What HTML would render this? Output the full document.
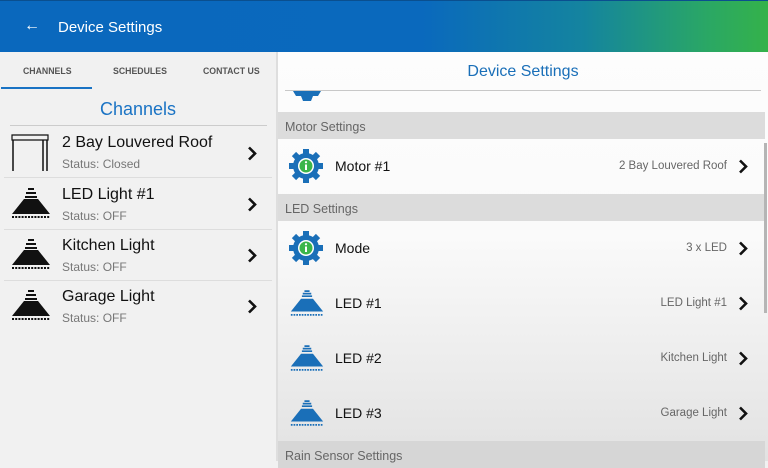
<!DOCTYPE html>
<html><head><style>
*{margin:0;padding:0;box-sizing:border-box}
body{width:768px;height:461px;overflow:hidden;font-family:"Liberation Sans",sans-serif;position:relative;background:#f1f1f1}
.hdr{position:absolute;left:0;top:0;width:768px;height:52px;background:linear-gradient(90deg,#0a68bd 0%,#0a69bd 55%,#14849f 76%,#2aa765 92%,#34b24a 100%);border-top:1px solid #0a4f8f}
.hdr .t{position:absolute;left:58px;top:18px;color:#fff;font-size:15px}
.hdr .a{position:absolute;left:24px;top:16px;color:#fff;font-size:16px;font-weight:bold}
.left{position:absolute;left:0;top:52px;width:276px;height:409px;background:#f1f1f1}
.tab{position:absolute;top:14px;font-size:9.5px;color:#555;font-weight:bold;transform:scaleX(.92);transform-origin:left}
.ul{position:absolute;left:1px;top:35px;width:91px;height:2px;background:#1a73c4}
.lt{position:absolute;left:0;width:276px;text-align:center;top:47px;font-size:18px;color:#1a73c4}
.hl{position:absolute;height:1px;background:#d4d4d4}
.row{position:absolute;left:0;width:276px;height:51px}
.row .n{position:absolute;left:62px;top:8px;font-size:16px;color:#111}
.row .s{position:absolute;left:62px;top:31px;font-size:12px;color:#777}
.chev{position:absolute}
.right{position:absolute;left:278px;top:52px;width:490px;height:409px;background:linear-gradient(#fdfdfd 0%,#fafafa 45%,#e2e2e2 100%)}
.rt{position:absolute;left:0;width:490px;text-align:center;top:11px;font-size:16px;color:#1a6fb8}
.bar{position:absolute;left:0;width:487px;height:27px;background:#dcdcdc;font-size:12.5px;color:#666;padding:8px 0 0 7px}
.ri{position:absolute;left:0;width:487px;height:55px}
.ri .n{position:absolute;left:57px;top:19px;font-size:14px;color:#111}
.ri .v{position:absolute;right:38px;top:21px;font-size:11.5px;color:#666}
.ri .c{position:absolute;right:17px;top:20px}
.ri svg.ic{position:absolute;left:11px;top:10px}
.sb{position:absolute;left:764px;top:143px;width:3px;height:170px;background:#b5b5b5}
</style></head><body>
<div class="hdr"><span class="a">&#8592;</span><span class="t">Device Settings</span></div>
<div class="left">
<span class="tab" style="left:23px">CHANNELS</span>
<span class="tab" style="left:113px">SCHEDULES</span>
<span class="tab" style="left:203px">CONTACT US</span>
<div class="ul"></div>
<div class="lt">Channels</div>
<div class="hl" style="left:10px;top:73px;width:257px;background:#ccc"></div>
<div class="row" style="top:74px">
<svg width="40" height="40" style="position:absolute;left:10px;top:5px" viewBox="0 0 40 40"><path d="M2 4h36v5H2z" fill="none" stroke="#111" stroke-width="1.2"/><path d="M3 9v31M37 9v31M33 9v31" stroke="#111" stroke-width="1.5"/></svg>
<span class="n">2 Bay Louvered Roof</span><span class="s">Status: Closed</span><svg class="chev" style="left:247px;top:20px" width="10" height="15" viewBox="0 0 10 15"><path d="M2 1.5l6 6-6 6" fill="none" stroke="#111" stroke-width="2.6"/></svg></div>
<div class="hl" style="left:4px;top:125px;width:268px;background:#ddd"></div>
<div class="row" style="top:126px"><svg width="42" height="40" style="position:absolute;left:10px;top:4px" viewBox="0 0 42 40"><path d="M18 7h6M16 11h10M15 15h12" stroke="#111" stroke-width="2"/><path d="M14 17h14l12 15H2z" fill="#111"/><path d="M2 35h38" stroke="#111" stroke-width="2" stroke-dasharray="2 1.2"/></svg><span class="n">LED Light #1</span><span class="s">Status: OFF</span><svg class="chev" style="left:247px;top:19px" width="10" height="15" viewBox="0 0 10 15"><path d="M2 1.5l6 6-6 6" fill="none" stroke="#111" stroke-width="2.6"/></svg></div>
<div class="hl" style="left:4px;top:177px;width:268px;background:#ddd"></div>
<div class="row" style="top:177px"><svg width="42" height="40" style="position:absolute;left:10px;top:4px" viewBox="0 0 42 40"><path d="M18 7h6M16 11h10M15 15h12" stroke="#111" stroke-width="2"/><path d="M14 17h14l12 15H2z" fill="#111"/><path d="M2 35h38" stroke="#111" stroke-width="2" stroke-dasharray="2 1.2"/></svg><span class="n">Kitchen Light</span><span class="s">Status: OFF</span><svg class="chev" style="left:247px;top:19px" width="10" height="15" viewBox="0 0 10 15"><path d="M2 1.5l6 6-6 6" fill="none" stroke="#111" stroke-width="2.6"/></svg></div>
<div class="hl" style="left:4px;top:228px;width:268px;background:#ddd"></div>
<div class="row" style="top:228px"><svg width="42" height="40" style="position:absolute;left:10px;top:4px" viewBox="0 0 42 40"><path d="M18 7h6M16 11h10M15 15h12" stroke="#111" stroke-width="2"/><path d="M14 17h14l12 15H2z" fill="#111"/><path d="M2 35h38" stroke="#111" stroke-width="2" stroke-dasharray="2 1.2"/></svg><span class="n">Garage Light</span><span class="s">Status: OFF</span><svg class="chev" style="left:247px;top:19px" width="10" height="15" viewBox="0 0 10 15"><path d="M2 1.5l6 6-6 6" fill="none" stroke="#111" stroke-width="2.6"/></svg></div>
</div>
<div style="position:absolute;left:276px;top:52px;width:2px;height:409px;background:#dedede"></div>
<div class="right">
<div class="rt">Device Settings</div>
<div class="hl" style="left:7px;top:38px;width:476px;background:#c8c8c8"></div>
<svg width="34" height="12" style="position:absolute;left:12px;top:39px" viewBox="0 0 34 12"><path d="M3 0h28l-3 5h-5l-2 5h-8l-2-5H6z" fill="#1a6fb8"/></svg>
<div class="bar" style="top:60px">Motor Settings</div>
<div class="ri" style="top:87px"><svg class="ic" width="34" height="34" viewBox="0 0 34 34"><g fill="#1a6fb8"><circle cx="17" cy="17" r="13"/><g id="t"><rect x="14" y="0" width="6" height="6"/><rect x="14" y="28" width="6" height="6"/><rect x="0" y="14" width="6" height="6"/><rect x="28" y="14" width="6" height="6"/></g><use href="#t" transform="rotate(45 17 17)"/></g><circle cx="17" cy="17" r="8" fill="#fff"/><circle cx="17" cy="17" r="6.5" fill="#3bb54a"/><rect x="16" y="15.5" width="2" height="5.5" fill="#fff"/><circle cx="17" cy="13.2" r="1.1" fill="#fff"/></svg><span class="n">Motor #1</span><span class="v">2 Bay Louvered Roof</span><svg class="c" width="10" height="15" viewBox="0 0 10 15"><path d="M2 1.5l6 6-6 6" fill="none" stroke="#111" stroke-width="2.6"/></svg></div>
<div class="bar" style="top:142px">LED Settings</div>
<div class="ri" style="top:169px"><svg class="ic" width="34" height="34" viewBox="0 0 34 34"><g fill="#1a6fb8"><circle cx="17" cy="17" r="13"/><g id="t2"><rect x="14" y="0" width="6" height="6"/><rect x="14" y="28" width="6" height="6"/><rect x="0" y="14" width="6" height="6"/><rect x="28" y="14" width="6" height="6"/></g><use href="#t2" transform="rotate(45 17 17)"/></g><circle cx="17" cy="17" r="8" fill="#fff"/><circle cx="17" cy="17" r="6.5" fill="#3bb54a"/><rect x="16" y="15.5" width="2" height="5.5" fill="#fff"/><circle cx="17" cy="13.2" r="1.1" fill="#fff"/></svg><span class="n">Mode</span><span class="v">3 x LED</span><svg class="c" width="10" height="15" viewBox="0 0 10 15"><path d="M2 1.5l6 6-6 6" fill="none" stroke="#111" stroke-width="2.6"/></svg></div>
<div class="ri" style="top:224px"><svg class="ic" width="36" height="34" viewBox="0 0 42 40"><path d="M18 6h6M16 9h10M15 12h12" stroke="#1a6fb8" stroke-width="2"/><path d="M14 15h14l12 15H2z" fill="#1a6fb8"/><path d="M2 34h38" stroke="#1a6fb8" stroke-width="2" stroke-dasharray="2 1.2"/></svg><span class="n">LED #1</span><span class="v">LED Light #1</span><svg class="c" width="10" height="15" viewBox="0 0 10 15"><path d="M2 1.5l6 6-6 6" fill="none" stroke="#111" stroke-width="2.6"/></svg></div>
<div class="ri" style="top:279px"><svg class="ic" width="36" height="34" viewBox="0 0 42 40"><path d="M18 6h6M16 9h10M15 12h12" stroke="#1a6fb8" stroke-width="2"/><path d="M14 15h14l12 15H2z" fill="#1a6fb8"/><path d="M2 34h38" stroke="#1a6fb8" stroke-width="2" stroke-dasharray="2 1.2"/></svg><span class="n">LED #2</span><span class="v">Kitchen Light</span><svg class="c" width="10" height="15" viewBox="0 0 10 15"><path d="M2 1.5l6 6-6 6" fill="none" stroke="#111" stroke-width="2.6"/></svg></div>
<div class="ri" style="top:334px"><svg class="ic" width="36" height="34" viewBox="0 0 42 40"><path d="M18 6h6M16 9h10M15 12h12" stroke="#1a6fb8" stroke-width="2"/><path d="M14 15h14l12 15H2z" fill="#1a6fb8"/><path d="M2 34h38" stroke="#1a6fb8" stroke-width="2" stroke-dasharray="2 1.2"/></svg><span class="n">LED #3</span><span class="v">Garage Light</span><svg class="c" width="10" height="15" viewBox="0 0 10 15"><path d="M2 1.5l6 6-6 6" fill="none" stroke="#111" stroke-width="2.6"/></svg></div>
<div class="bar" style="top:389px;background:#d6d6d6">Rain Sensor Settings</div>
</div>
<div class="sb"></div>
</body></html>
